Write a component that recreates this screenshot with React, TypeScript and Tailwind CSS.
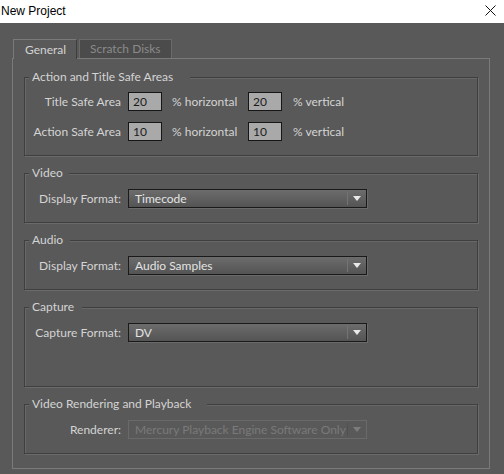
import React from 'react';

const font = "font-['Lato','Liberation_Sans',Arial,sans-serif]";

function Group({
  title,
  labelWidth,
  height,
  children,
}: {
  title: string;
  labelWidth: string;
  height: string;
  children: React.ReactNode;
}) {
  return (
    <div
      className={`relative mx-[11px] mt-[17px] first:mt-[18px] ${height} border border-[#3f3f3f] shadow-[1px_1px_0_#6b6b6b,inset_1px_1px_0_#686868]`}
    >
      <span
        className={`absolute left-[4px] -top-[8px] ${labelWidth} pl-[3px] bg-[#595959] leading-[14px] whitespace-nowrap text-[#d4d4d4]`}
      >
        {title}
      </span>
      {children}
    </div>
  );
}

function Label({ children }: { children: React.ReactNode }) {
  return (
    <span className="w-[97px] shrink-0 pr-[1px] text-right text-[#d4d4d4] whitespace-nowrap">{children}</span>
  );
}

function NumberBox({ value }: { value: string }) {
  return (
    <div className="w-[34px] h-[19px] shrink-0 border border-[#161616] bg-[#a9a9a9] pl-[4px] flex items-center text-[#1c1c1c]">
      {value}
    </div>
  );
}

function Select({ value, disabled }: { value: string; disabled?: boolean }) {
  return (
    <div
      className={
        disabled
          ? 'ml-[6px] w-[239px] h-[19px] border border-[#6a6a6a] bg-[#595959] flex items-center text-[#7a7a7a]'
          : 'ml-[6px] w-[239px] h-[19px] border border-[#1a1a1a] bg-gradient-to-b from-[#6c6c6c] to-[#545454] flex items-center text-[#e4e4e4] shadow-[1px_1px_0_#6a6a6a]'
      }
    >
      <span className="flex-1 pl-[6px] whitespace-nowrap overflow-hidden">{value}</span>
      <span
        className={
          disabled
            ? 'h-[13px] w-px bg-[#6e6e6e] border-r border-[#505050]'
            : 'h-[13px] w-px bg-[#3c3c3c] border-r border-[#747474]'
        }
      />
      <span className="w-[18px] flex justify-center">
        <svg width="8" height="5" viewBox="0 0 8 5">
          <polygon points="0,0 8,0 4,5" fill={disabled ? '#7c7c7c' : '#e8e8e8'} />
        </svg>
      </span>
    </div>
  );
}

export default function App() {
  return (
    <div className={`w-[504px] h-[474px] flex flex-col bg-[#595959] text-[12px] ${font}`}>
      <div className="h-[23px] bg-white flex items-center justify-between pl-[1px] pr-[8px] text-black font-['Liberation_Sans',Arial,sans-serif]">
        <span className="-mt-[2px]">New Project</span>
        <svg width="11" height="11" viewBox="0 0 11 11" className="-mt-[3px]">
          <path d="M0.5 0.5 L10.5 10.5 M10.5 0.5 L0.5 10.5" stroke="#111" strokeWidth="1" />
        </svg>
      </div>

      <div className="flex-1 pt-[16px] pl-[12px] pr-[14px] pb-[5px] flex flex-col">
        <div className="relative z-10 flex items-end h-[19px] pl-[1px] gap-[2px]">
          <div className="h-[20px] -mb-px w-[64px] bg-[#595959] border-t border-l border-[#7a7a7a] border-r-[#3e3e3e] border-r flex items-center pl-[11px] text-[#d4d4d4]">
            General
          </div>
          <div className="h-[19px] w-[93px] bg-[#4b4b4b] border border-b-0 border-[#6a6a6a] flex items-center pl-[10px] text-[#8a8a8a]">
            Scratch Disks
          </div>
        </div>

        <div className="flex-1 flex flex-col border border-[#7a7a7a]">
          <Group title="Action and Title Safe Areas" labelWidth="w-[161px]" height="h-[79px]">
            <div className="flex flex-col gap-[11px] pt-[14px]">
              {[
                ['Title Safe Area', '20', '20'],
                ['Action Safe Area', '10', '10'],
              ].map(([label, h, v]) => (
                <div key={label} className="flex items-center">
                  <Label>{label}</Label>
                  <div className="ml-[6px]">
                    <NumberBox value={h} />
                  </div>
                  <span className="w-[86px] shrink-0 pl-[10px] text-[#d4d4d4] whitespace-nowrap">% horizontal</span>
                  <NumberBox value={v} />
                  <span className="pl-[11px] text-[#d4d4d4] whitespace-nowrap">% vertical</span>
                </div>
              ))}
            </div>
          </Group>

          <Group title="Video" labelWidth="w-[40px]" height="h-[50px]">
            <div className="flex items-center pt-[15px]">
              <Label>Display Format:</Label>
              <Select value="Timecode" />
            </div>
          </Group>

          <Group title="Audio" labelWidth="w-[41px]" height="h-[50px]">
            <div className="flex items-center pt-[15px]">
              <Label>Display Format:</Label>
              <Select value="Audio Samples" />
            </div>
          </Group>

          <Group title="Capture" labelWidth="w-[53px]" height="h-[80px]">
            <div className="flex items-center pt-[15px]">
              <Label>Capture Format:</Label>
              <Select value="DV" />
            </div>
          </Group>

          <Group title="Video Rendering and Playback" labelWidth="w-[178px]" height="h-[50px]">
            <div className="flex items-center pt-[15px]">
              <Label>Renderer:</Label>
              <Select value="Mercury Playback Engine Software Only" disabled />
            </div>
          </Group>
        </div>
      </div>
    </div>
  );
}
